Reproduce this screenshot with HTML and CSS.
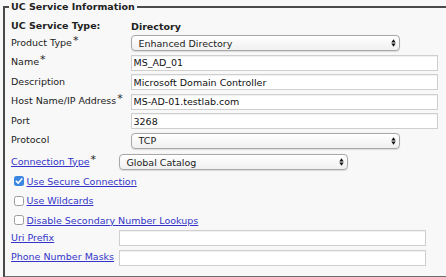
FILE: index.html
```html
<!DOCTYPE html>
<html>
<head>
<meta charset="utf-8">
<link rel="stylesheet" href="styles.css">
</head>
<body>
<fieldset class="box">
  <legend class="legend">UC Service Information</legend>
  <div class="form">
    <div class="row head"><span class="lbl bold">UC Service Type:</span><span class="bold">Directory</span></div>
    <div class="row first"><span class="lbl">Product Type<span class="req">*</span></span>
      <div class="sel w269"><span>Enhanced Directory</span><svg class="arr" width="5" height="8" viewBox="0 0 5 8"><path d="M0.3 3.4 L2.5 0.3 L4.7 3.4 Z M0.3 4.6 L2.5 7.7 L4.7 4.6 Z"/></svg></div></div>
    <div class="row"><span class="lbl">Name<span class="req">*</span></span><input class="inp w307" type="text" value="MS_AD_01"></div>
    <div class="row"><span class="lbl">Description</span><input class="inp w307" type="text" value="Microsoft Domain Controller"></div>
    <div class="row"><span class="lbl">Host Name/IP Address<span class="req">*</span></span><input class="inp w307" type="text" value="MS-AD-01.testlab.com"></div>
    <div class="row"><span class="lbl">Port</span><input class="inp w307" type="text" value="3268"></div>
    <div class="row"><span class="lbl">Protocol</span>
      <div class="sel w269"><span>TCP</span><svg class="arr" width="5" height="8" viewBox="0 0 5 8"><path d="M0.3 3.4 L2.5 0.3 L4.7 3.4 Z M0.3 4.6 L2.5 7.7 L4.7 4.6 Z"/></svg></div></div>
    <div class="row conn"><span class="lbl short"><a class="link" href="#">Connection Type</a><span class="req">*</span></span>
      <div class="sel w229"><span>Global Catalog</span><svg class="arr" width="5" height="8" viewBox="0 0 5 8"><path d="M0.3 3.4 L2.5 0.3 L4.7 3.4 Z M0.3 4.6 L2.5 7.7 L4.7 4.6 Z"/></svg></div></div>
    <div class="row chkrow first-chk"><span class="cb on"><svg width="10" height="10" viewBox="0 0 10 10"><path d="M2.3 5.2 L4.2 7.1 L7.8 2.9" fill="none" stroke="#fff" stroke-width="1.6" stroke-linecap="round" stroke-linejoin="round"/></svg></span><a class="link" href="#">Use Secure Connection</a></div>
    <div class="row chkrow"><span class="cb"></span><a class="link" href="#">Use Wildcards</a></div>
    <div class="row chkrow"><span class="cb"></span><a class="link" href="#">Disable Secondary Number Lookups</a></div>
    <div class="row uri"><span class="lbl short"><a class="link" href="#">Uri Prefix</a></span><input class="inp w307" type="text" value=""></div>
    <div class="row"><span class="lbl short"><a class="link" href="#">Phone Number Masks</a></span><input class="inp w307" type="text" value=""></div>
  </div>
</fieldset>
</body>
</html>
```

FILE: styles.css
```css
html, body {
  margin: 0;
  padding: 0;
  background: #f8f8f8;
  overflow: hidden;
}
body {
  width: 446px;
  height: 277px;
  font-family: "DejaVu Sans", Verdana, sans-serif;
  font-size: 9.5px;
  color: #222;
}
.box {
  margin: 0 0 0 3px;
  padding: 0 0 0 4px;
  border: 2px solid #4a4a4a;
  border-right: none;
  border-bottom-color: #6d6d6d;
  min-width: 0;
}
.legend {
  padding: 0 2px;
  font-weight: bold;
  line-height: 14px;
}
.form {
  margin-left: 2px;
  display: flex;
  flex-direction: column;
  padding-bottom: 10.5px;
}
.row {
  display: flex;
  align-items: center;
  height: 16px;
  margin-top: 3.5px;
}
.row.head { margin-top: 4px; }
.row.first { margin-top: 1px; }
.row.conn { margin-top: 5.5px; }
.row.first-chk { margin-top: 3px; }
.row.uri { margin-top: 2px; }
.lbl {
  width: 120px;
  flex: none;
  white-space: nowrap;
  position: relative;
  top: -1px;
}
.lbl.short { width: 108px; }
.bold { font-weight: bold; }
.req {
  font-size: 11px;
  position: relative;
  top: -2px;
  margin-left: 1px;
}
.link {
  color: #3434c8;
  text-decoration: underline;
}
.sel {
  box-sizing: border-box;
  height: 16px;
  border: 1px solid #a8a8a8;
  border-radius: 4px;
  background: linear-gradient(#ffffff, #f0f0f0);
  box-shadow: 0 0.5px 1px rgba(0, 0, 0, 0.12);
  display: flex;
  align-items: center;
  justify-content: space-between;
  padding: 0 3px 0 6.5px;
}
.w269 { width: 269px; }
.w229 { width: 229px; }
.w307 { width: 307px; }
.arr { fill: #111; flex: none; }
.inp {
  box-sizing: border-box;
  height: 16px;
  margin: 0;
  padding: 0 1.5px;
  border: 1px solid #cfcfcf;
  box-shadow: inset 0 1px 1px rgba(0, 0, 0, 0.06);
  background: #fff;
  font-family: "DejaVu Sans", Verdana, sans-serif;
  font-size: 9.5px;
  color: #111;
  outline: none;
}
.chkrow { padding-left: 3px; }
.cb {
  box-sizing: border-box;
  width: 10px;
  height: 10px;
  border: 1px solid #9c9c9c;
  border-radius: 2.5px;
  background: #fff;
  margin-right: 2.5px;
  flex: none;
  display: flex;
}
.cb.on {
  border: none;
  background: #3b86e0;
}
```
